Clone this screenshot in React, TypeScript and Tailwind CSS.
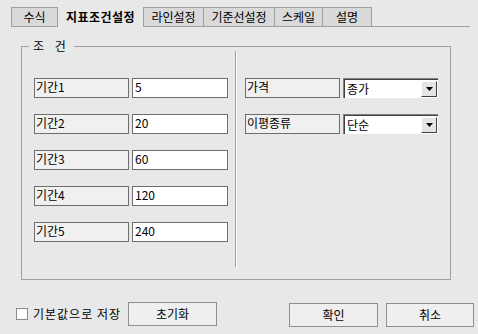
import React from "react";

const font = { fontFamily: '"Noto Sans CJK KR", "Liberation Sans", sans-serif' };

const tabs = [
  { label: "수식", w: "w-[47px]", cls: "border-l border-r" },
  { label: "지표조건설정", w: "w-[85px]", cls: "", active: true },
  { label: "라인설정", w: "w-[61px]", cls: "border-l border-r" },
  { label: "기준선설정", w: "w-[71px]", cls: "border-r" },
  { label: "스케일", w: "w-[48px]", cls: "border-r" },
  { label: "설명", w: "w-[49px]", cls: "border-r" },
];

const periods = [
  { label: "기간1", value: "5" },
  { label: "기간2", value: "20" },
  { label: "기간3", value: "60" },
  { label: "기간4", value: "120" },
  { label: "기간5", value: "240" },
];

function Label({ text }: { text: string }) {
  return (
    <div className="h-[20px] w-[95px] border border-[#6e6e6e] bg-[#f0f0f0] pl-[1px] text-[12px] leading-[15px] text-black">
      {text}
    </div>
  );
}

function Combo({ value }: { value: string }) {
  return (
    <div className="flex h-[20px] w-[95px] border-t border-l border-[#808080] bg-white">
      <div className="flex flex-1 border-t border-l border-[#404040]">
        <div className="flex-1 pl-[2px] pt-[2px] text-[12px] leading-[14px] text-black">{value}</div>
        <div className="mr-[1px] mt-[1px] flex h-[16px] w-[16px] items-center justify-center border-t border-l border-white border-r border-b border-r-[#404040] border-b-[#404040] bg-[#e4e4e4]">
          <svg width="7" height="4" viewBox="0 0 7 4">
            <path d="M0 0h7L3.5 4z" fill="#000" />
          </svg>
        </div>
      </div>
    </div>
  );
}

function Button({ text, w }: { text: string; w: string }) {
  return (
    <button
      type="button"
      className={`${w} h-[24px] border border-[#8f8f8f] bg-[#efefef] text-[12px] leading-[14px] text-black`}
    >
      {text}
    </button>
  );
}

export default function App() {
  return (
    <div className="flex h-[334px] w-[478px] flex-col bg-[#e8e8e8] text-black" style={font}>
      <div className="ml-[11px] mr-[8px] mt-[7px] flex h-[20px]">
        {tabs.map((t) =>
          t.active ? (
            <div
              key={t.label}
              className={`${t.w} flex items-center justify-center text-[12px] font-bold tracking-[0.5px]`}
            >
              {t.label}
            </div>
          ) : (
            <div
              key={t.label}
              className={`${t.w} ${t.cls} flex items-center justify-center border-t border-b border-[#a0a0a0] bg-[#d9d9d9] text-[12px]`}
            >
              {t.label}
            </div>
          )
        )}
        <div className="flex-1 border-b border-[#a0a0a0]" />
      </div>

      <div className="relative ml-[21px] mt-[19px] h-[234px] w-[430px] border border-[#a0a0a0]">
        <div className="absolute -top-[9px] left-[7px] bg-[#e8e8e8] px-[4px] text-[12px] leading-[16px] tracking-[4px]">
          조 건
        </div>
        <div className="flex pl-[12px]">
          <div className="flex flex-col gap-[16px] pt-[31px]">
            {periods.map((p) => (
              <div key={p.label} className="flex gap-[3px]">
                <Label text={p.label} />
                <div className="h-[20px] w-[96px] border border-[#6e6e6e] bg-white pl-[2px] text-[12px] leading-[15px]">
                  {p.value}
                </div>
              </div>
            ))}
          </div>
          <div className="ml-[7px] mt-[4px] h-[216px] w-[2px] border-l border-[#a0a0a0] bg-white" />
          <div className="ml-[8px] flex flex-col gap-[16px] pt-[31px]">
            <div className="flex gap-[3px]">
              <Label text="가격" />
              <Combo value="종가" />
            </div>
            <div className="flex gap-[3px]">
              <Label text="이평종류" />
              <Combo value="단순" />
            </div>
          </div>
        </div>
      </div>

      <div className="ml-[16px] mt-[21px] flex items-center">
        <div className="flex w-[112px] items-center gap-[5px]">
          <div className="h-[12px] w-[12px] border border-[#8a8a8a] bg-white" />
          <span className="text-[12px] leading-[14px] tracking-[1px]">기본값으로 저장</span>
        </div>
        <Button text="초기화" w="w-[89px]" />
        <div className="ml-[72px]">
          <Button text="확인" w="w-[89px]" />
        </div>
        <div className="ml-[8px]">
          <Button text="취소" w="w-[88px]" />
        </div>
      </div>
    </div>
  );
}
